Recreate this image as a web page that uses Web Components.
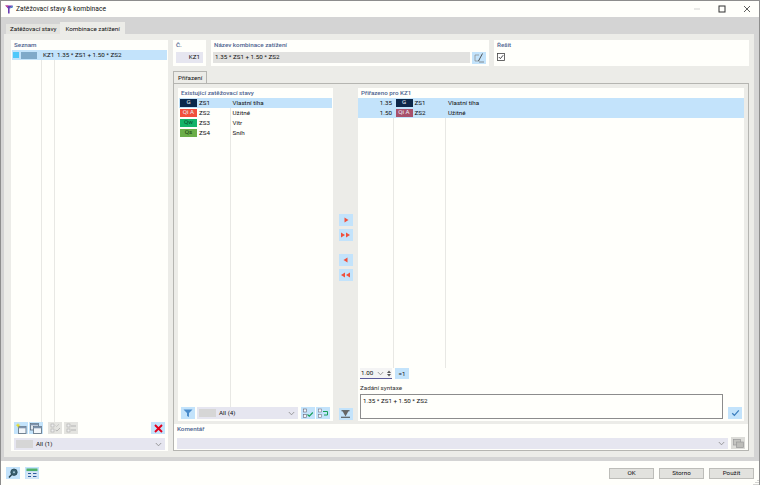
<!DOCTYPE html>
<html lang="cs"><head><meta charset="utf-8"><title>Zatěžovací stavy</title>
<style>
html,body{margin:0;padding:0;width:760px;height:485px;overflow:hidden;background:#fff}
body{font:6.25px/10px Roboto,"Open Sans",sans-serif;color:#111}
</style></head><body>
<dlg-app></dlg-app>
<script>
const def=(n,css,html)=>{customElements.define(n,class extends HTMLElement{
 constructor(){super();const r=this.attachShadow({mode:'open'});r.innerHTML='<style>'+css+'</style>'+(typeof html==='function'?html(this):html);}
})};
const I={
 right:'<svg width="8" height="8" viewBox="0 0 8 8"><path d="M2.5 1.5L6.5 4L2.5 6.5Z" fill="#f0503c"/></svg>',
 rright:'<svg width="11" height="8" viewBox="0 0 11 8"><path d="M1 1.5L5 4L1 6.5ZM6 1.5L10 4L6 6.5Z" fill="#f0503c"/></svg>',
 left:'<svg width="8" height="8" viewBox="0 0 8 8"><path d="M5.5 1.5L1.5 4L5.5 6.5Z" fill="#f0503c"/></svg>',
 lleft:'<svg width="11" height="8" viewBox="0 0 11 8"><path d="M5 1.5L1 4L5 6.5ZM10 1.5L6 4L10 6.5Z" fill="#f0503c"/></svg>',
 chev:'<svg width="7" height="5" viewBox="0 0 7 5"><path d="M.8 1L3.5 3.8L6.2 1" fill="none" stroke="#888" stroke-width=".8"/></svg>',
 filter:'<svg width="10" height="10" viewBox="0 0 10 10"><path d="M.5 1.5H9.5L6 5V9L4 8V5Z" fill="#4a8ccb"/></svg>',
 bottom:'<svg width="11" height="8" viewBox="0 0 11 8"><path d="M1.5 .8H9.5M1 7.2H10" stroke="#444" stroke-width="1.1"/><path d="M2.5 1L8.5 1L5.5 6.5Z" fill="#666"/></svg>',
 check:'<svg width="9" height="8" viewBox="0 0 9 8"><path d="M1.2 4.2L3.4 6.3L7.8 1.4" fill="none" stroke="#3a7dbd" stroke-width="1.2"/></svg>',
 x:'<svg width="9" height="9" viewBox="0 0 9 9"><path d="M1 1L8 8M8 1L1 8" stroke="#e3001b" stroke-width="1.9"/></svg>',
 edit:'<svg width="11" height="10" viewBox="0 0 11 10"><path d="M5 2H1V8H5" fill="none" stroke="#888" stroke-width=".7"/><path d="M8.5 .5L4.5 8" stroke="#444" stroke-width=".9"/><path d="M5 9H10" stroke="#666" stroke-width=".7"/></svg>',
 newf:'<svg width="12" height="11" viewBox="0 0 12 11"><rect x="3.5" y="3.5" width="7.5" height="7" fill="#f2f6fa" stroke="#5a6a7a" stroke-width=".8"/><rect x="3.5" y="3.5" width="7.5" height="1.8" fill="#7d93ad"/><path d="M3 0L3.6 1.6L5.5 2L3.8 3L3 5L2.2 3L.5 2L2.4 1.6Z" fill="#e4dc30"/></svg>',
 copy:'<svg width="12" height="11" viewBox="0 0 12 11"><rect x=".5" y=".5" width="8" height="6.5" fill="#dfe6ef" stroke="#5a6a7a" stroke-width=".8"/><rect x=".5" y=".5" width="8" height="1.8" fill="#7d93ad"/><rect x="3.5" y="3.5" width="8" height="7" fill="#f2f6fa" stroke="#5a6a7a" stroke-width=".8"/><rect x="3.5" y="3.5" width="8" height="1.8" fill="#7d93ad"/></svg>',
 chkG:'<svg width="11" height="10" viewBox="0 0 11 10"><rect x="1" y="1" width="3" height="3" fill="#eee" stroke="#aaa" stroke-width=".6"/><rect x="1" y="6" width="3" height="3" fill="#eee" stroke="#aaa" stroke-width=".6"/><path d="M5.5 7L7 8L10 5" fill="none" stroke="#aaa" stroke-width=".8"/><path d="M5.5 2.5L6.5 3.5L9 1.2" fill="none" stroke="#bbb" stroke-width=".7"/></svg>',
 unG:'<svg width="11" height="10" viewBox="0 0 11 10"><rect x="1" y="1" width="3" height="3" fill="#eee" stroke="#aaa" stroke-width=".6"/><rect x="1" y="6" width="3" height="3" fill="#eee" stroke="#aaa" stroke-width=".6"/><path d="M5 3H10M5 7H10" stroke="#b4b4b4" stroke-width="1"/></svg>',
 chkA:'<svg width="12" height="11" viewBox="0 0 12 11"><rect x="1.5" y="1" width="3" height="3" fill="#f2f6fa" stroke="#667" stroke-width=".6"/><rect x="1.5" y="6.5" width="3" height="3" fill="#f2f6fa" stroke="#667" stroke-width=".6"/><path d="M5.5 6.5L7.3 8.2L10.8 4.5" fill="none" stroke="#16a058" stroke-width="1.1"/></svg>',
 unA:'<svg width="12" height="11" viewBox="0 0 12 11"><rect x="1.5" y="1" width="3" height="3" fill="#f2f6fa" stroke="#778" stroke-width=".6"/><rect x="1.5" y="6.5" width="3" height="3" fill="#f2f6fa" stroke="#778" stroke-width=".6"/><path d="M6 3.5H10.5V7H7" fill="none" stroke="#16a058" stroke-width="1"/></svg>',
 search:'<svg width="12" height="11" viewBox="0 0 12 11"><circle cx="7" cy="4.2" r="3.2" fill="#3a6272" stroke="#26444f" stroke-width=".8"/><path d="M4.7 6.5L2 9.6" stroke="#26444f" stroke-width="1.5"/><circle cx="7" cy="4.2" r="1" fill="#a8c8d6"/></svg>',
 table:'<svg width="12" height="11" viewBox="0 0 12 11"><rect x=".5" y=".5" width="11" height="2.6" fill="#4fb168"/><rect x=".5" y="3.6" width="11" height="7" fill="#d9e6f4"/><path d="M2 5.5H5M2 8.5H5M7 5.5H10.5M7 8.5H10.5" stroke="#2b5c9e" stroke-width="1.2"/></svg>',
 copyG:'<svg width="11" height="9" viewBox="0 0 11 9"><rect x=".5" y=".5" width="7" height="5.5" fill="#c4c4c0" stroke="#999" stroke-width=".7"/><rect x="3.5" y="3" width="7" height="5.5" fill="#bdbdb9" stroke="#999" stroke-width=".7"/></svg>'
};
def('ic-btn',`:host{display:flex;align-items:center;justify-content:center;width:14px;height:12px;background:var(--bg,#c3e3fb);flex:none}
:host([off]){--bg:#e4e4e0}`,'<slot></slot>');
def('ct-panel',`:host{display:flex;flex-direction:column;background:#fffffb;box-sizing:border-box;min-width:0}
.h{color:#4d6390;font-weight:500;height:10px;line-height:10px;padding:0 0 0 3px;flex:none;white-space:nowrap}
.b{flex:1;display:flex;flex-direction:column;min-height:0}`,
 e=>`<div class="h">${e.getAttribute('label')||''}</div><div class="b"><slot></slot></div>`);
def('cb-box',`:host{display:flex;align-items:center;background:#e6e6f0;height:var(--h,12px);box-sizing:border-box;padding:0 3px 0 2px;min-width:0}
.sw{width:17px;height:8px;background:#d6d6d6;margin-right:3px;flex:none}.t{flex:1;white-space:nowrap}`,
 e=>`${e.hasAttribute('sw')?'<span class="sw"></span>':''}<span class="t"><slot></slot></span>${I.chev}`);
def('lc-badge',`:host{display:inline-block;width:17px;height:7.5px;line-height:7.5px;text-align:center;font-size:6.2px;flex:none;color:var(--c,#e8eef8);background:var(--b,#0e2a4c)}`,'<slot></slot>');
def('lc-row',`:host{display:flex;align-items:center;height:10px;white-space:nowrap}
:host([sel]){background:#c3e3fb}
.v{width:35px;box-sizing:border-box;text-align:right;padding-right:1px;flex:none}
.bd{width:17px;display:flex;flex:none;margin:0 2px 0 2.5px}.bd0{margin-left:1px}
.z{width:30px;flex:none;box-sizing:border-box}.n{padding-left:3.5px}`,
 e=>{const v=e.getAttribute('val');return `${v?`<span class="v">${v}</span>`:''}<span class="bd ${v?'':'bd0'}"><slot name="b"></slot></span><span class="z">${e.getAttribute('z')}</span><span class="n">${e.getAttribute('n')}</span>`});
def('lc-list',`:host{display:block;position:relative;flex:1;min-height:0;margin:0 1px}
.l{position:absolute;top:0;bottom:0;width:1px;background:#e8e8e4}
.rows{position:relative}`,
 e=>(e.getAttribute('lines')||'').split(',').map(x=>`<i class="l" style="left:${x}px"></i>`).join('')+'<div class="rows"><slot></slot></div>');
def('dlg-tab',`:host{display:block;height:10px;line-height:10px;padding:0 4px;background:#e4e4e0;white-space:nowrap}
:host([on]){background:#ecece8;height:12px;line-height:14px;padding:0 5px}`,'<slot></slot>');
def('dlg-push',`:host{display:flex;width:45px;height:11px;align-items:center;justify-content:center;background:#e2e2de;border:1px solid #bdbdb9;box-sizing:border-box}`,'<slot></slot>');
const kz='1.35 * ZS1 + 1.50 * ZS2';
def('lc-row-k',`:host{display:flex;align-items:center;height:10px;background:#c3e3fb;white-space:nowrap}
.a{width:6px;height:6px;background:#4fc8fa;margin:0 2px 0 1px}.b{width:16px;height:7px;background:#7fa9c9;margin-right:6px}.k{width:14px}`,
`<span class="a"></span><span class="b"></span><span class="k">KZ1</span><span>${kz}</span>`);
def('dlg-app',`:host{display:flex;flex-direction:column;width:760px;height:485px;box-sizing:border-box;border:1px solid #8d8d8d;border-bottom:0;background:#fffffb}
.title{height:16px;display:flex;align-items:center;padding:0 0 0 4px;flex:none;font-size:6.7px}
.title svg.logo{margin-right:3px}
.wb{margin-left:auto;display:flex;align-items:center}
.wb span{width:25px;display:flex;justify-content:center}
.band{background:#d4d4d4;padding:0 0 4px 0;flex:1;display:flex;flex-direction:column;min-height:0}
.tabs{display:flex;height:17px;padding:0 0 0 5px;box-sizing:border-box;align-items:flex-end;flex:none}
.main{flex:1;background:#ecece8;margin:0 5px 0 3px;padding:6px 5px 6px 7px;display:flex;gap:5px;min-height:0}
.left{width:157px;flex:none}
.left .foot{padding:0 3px;flex:none}
.tb{display:flex;height:12px;align-items:center;margin-bottom:4px}
.sp{flex:1}
.right{flex:1;display:flex;flex-direction:column;min-width:0}
.top{display:flex;gap:5px;height:26px;flex:none}
.no{margin:2px 3px 0;background:#e6e6f0;height:11px;line-height:11px;text-align:right;padding-right:3px}
.name{display:flex;gap:2px;padding:2px 3px 0 2px}
.name div{flex:1;background:#e2e2e0;height:11px;line-height:11px;padding-left:2px}
.solve{padding:3px}
.inner-tabs{display:flex;height:12px;padding:5px 0 0 0;flex:none}
.tabbed{flex:1;border:1px solid #b5b5b1;background:#ecece8;display:flex;flex-direction:column;min-height:0;box-sizing:border-box}
.cols{display:flex;flex:1;min-height:0;padding:4px 4px 3px 4px}
.c1{width:155px;flex:none}
.mid{width:25px;flex:none;display:flex;flex-direction:column;align-items:center;padding-bottom:1px;box-sizing:border-box}
.mid .g{display:flex;flex-direction:column;gap:3px}
.c2{flex:1;min-width:0;box-sizing:border-box}
.fr{display:flex;align-items:center;gap:2px;height:12px;padding:0 3px;margin-bottom:2px;flex:none}
.fr2{display:flex;align-items:center;height:11px;padding:0 2px;margin-bottom:3px;flex:none}
.spin{display:flex;align-items:center;width:32px;height:11px;border-bottom:1px solid #5a5a9a;box-sizing:border-box;background:#f4f4f4;padding:0 1px;justify-content:space-between}
.ss{display:flex;flex-direction:column;gap:1px}
.syn{padding:0 2px;flex:none}
.syn .lab{height:12px;line-height:12px;color:#333}
.synr{display:flex;align-items:flex-end;gap:5px;padding-bottom:2px}
.ta{flex:none;width:363px;height:25px;border:1px solid #8c8c8c;box-sizing:border-box;padding:1px 2px;background:#fffffb}
.com{background:#fffffb;height:26px;padding:0 3px;flex:none;box-sizing:border-box}
.com .lab{color:#4d6390;font-weight:500;height:13px;line-height:11px}
.com .r{display:flex;gap:3px;align-items:center}
.com cb-box{flex:1;--h:11px}
.foot-bar{height:24px;flex:none;display:flex;align-items:center;padding:0 5px 0 5px;gap:5px;background:#fffffb;position:relative}
.foot-bar .sp{flex:1}
.grip{position:absolute;right:0;bottom:0}
`,`
<div class="title"><svg class="logo" width="8" height="9" viewBox="0 0 8 9"><path d="M.2 .5H7.8L4.6 3.4V8.5H3V3.4Z" fill="#6a3fb5"/><path d="M.2 .5H3.5L2.2 2.3Z" fill="#e04a8a"/><path d="M4.6 3.4L7.8 .5V2.4Z" fill="#2f78c0"/></svg>Zatěžovací stavy &amp; kombinace
<div class="wb"><span><svg width="8" height="8"><path d="M1 4H7" stroke="#c8c8c8" stroke-width=".8"/></svg></span><span><svg width="8" height="8"><rect x="1" y="1" width="6" height="6" fill="none" stroke="#333"/></svg></span><span><svg width="8" height="8"><path d="M1 1L7 7M7 1L1 7" stroke="#333" stroke-width=".8"/></svg></span></div></div>
<div class="band">
<div class="tabs"><dlg-tab>Zatěžovací stavy</dlg-tab><dlg-tab on>Kombinace zatížení</dlg-tab></div>
<div class="main">
 <ct-panel class="left" label="Seznam">
  <lc-list lines="29,42">
   <lc-row-k></lc-row-k>
  </lc-list>
  <div class="foot">
   <div class="tb"><ic-btn>${I.newf}</ic-btn><ic-btn style="margin-left:1px">${I.copy}</ic-btn><ic-btn off style="margin-left:5px">${I.chkG}</ic-btn><ic-btn off style="margin-left:2px">${I.unG}</ic-btn><span class="sp"></span><ic-btn>${I.x}</ic-btn></div>
   <cb-box sw style="margin-bottom:1px">All (1)</cb-box>
  </div>
 </ct-panel>
 <div class="right">
  <div class="top">
   <ct-panel label="Č." style="width:33px;flex:none"><div class="no">KZ1</div></ct-panel>
   <ct-panel label="Název kombinace zatížení" style="width:278px;flex:none"><div class="name"><div>${kz}</div><ic-btn>${I.edit}</ic-btn></div></ct-panel>
   <ct-panel label="Řešit" style="flex:1"><div class="solve"><svg width="8" height="8" viewBox="0 0 8 8" style="display:block"><rect x=".5" y=".5" width="7" height="7" fill="#fff" stroke="#444" stroke-width=".8"/><path d="M1.8 4L3.4 5.6L6.2 2.2" fill="none" stroke="#333" stroke-width=".9"/></svg></div></ct-panel>
  </div>
  <div class="inner-tabs"><dlg-tab on style="border:1px solid #b5b5b1;border-bottom:0;box-sizing:border-box;height:13px;line-height:13px;padding:0 4px">Přiřazení</dlg-tab></div>
  <div class="tabbed">
   <div class="cols">
    <ct-panel class="c1" label="Existující zatěžovací stavy">
     <lc-list lines="51">
      <lc-row sel z="ZS1" n="Vlastní tíha"><lc-badge slot="b" style="--b:#0c2749">G</lc-badge></lc-row>
      <lc-row z="ZS2" n="Užitné"><lc-badge slot="b" style="--b:#f2503c">Qi A</lc-badge></lc-row>
      <lc-row z="ZS3" n="Vítr"><lc-badge slot="b" style="--b:#14b368;--c:#0a4a2a">Qw</lc-badge></lc-row>
      <lc-row z="ZS4" n="Sníh"><lc-badge slot="b" style="--b:#6cae48;--c:#173c10">Qs</lc-badge></lc-row>
     </lc-list>
     <div class="fr"><ic-btn>${I.filter}</ic-btn><cb-box sw style="width:101px;flex:none">All (4)</cb-box><ic-btn style="margin-left:1px">${I.chkA}</ic-btn><ic-btn style="margin-left:-1px;">${I.unA}</ic-btn></div>
    </ct-panel>
    <div class="mid">
     <div style="height:126px;flex:none"></div>
     <div class="g"><ic-btn>${I.right}</ic-btn><ic-btn>${I.rright}</ic-btn></div>
     <div style="height:13px;flex:none"></div>
     <div class="g"><ic-btn>${I.left}</ic-btn><ic-btn>${I.lleft}</ic-btn></div>
     <div style="flex:1"></div>
     <ic-btn>${I.bottom}</ic-btn>
    </div>
    <ct-panel class="c2" label="Přiřazeno pro KZ1">
     <lc-list lines="35,87" style="margin:0">
      <lc-row sel val="1.35" z="ZS1" n="Vlastní tíha"><lc-badge slot="b" style="--b:#0c2749">G</lc-badge></lc-row>
      <lc-row sel val="1.50" z="ZS2" n="Užitné"><lc-badge slot="b" style="--b:#a8506a">Qi A</lc-badge></lc-row>
     </lc-list>
     <div class="fr2"><div class="spin">1.00 ${I.chev}<span class="ss"><svg width="4" height="3" style="display:block"><path d="M0 3L2 .5L4 3Z" fill="#555"/></svg><svg width="4" height="3" style="display:block"><path d="M0 0L2 2.5L4 0Z" fill="#555"/></svg></span></div><ic-btn style="margin-left:3px;height:11px">=1</ic-btn></div>
     <div class="syn"><div class="lab">Zadání syntaxe</div><div class="synr"><div class="ta">${kz}</div><ic-btn>${I.check}</ic-btn></div></div>
    </ct-panel>
   </div>
   <div class="com"><div class="lab">Komentář</div><div class="r"><cb-box></cb-box><ic-btn off style="--bg:#dcdcd8">${I.copyG}</ic-btn></div></div>
  </div>
 </div>
</div>
</div>
<div class="foot-bar"><ic-btn>${I.search}</ic-btn><ic-btn>${I.table}</ic-btn><span class="sp"></span><dlg-push>OK</dlg-push><dlg-push>Storno</dlg-push><dlg-push>Použít</dlg-push>
<svg class="grip" width="6" height="6"><path d="M5 1V2M3 3V4M5 3V4M1 5V6M3 5V6M5 5V6" stroke="#aaa"/></svg></div>
`);
</script>
</body></html>
